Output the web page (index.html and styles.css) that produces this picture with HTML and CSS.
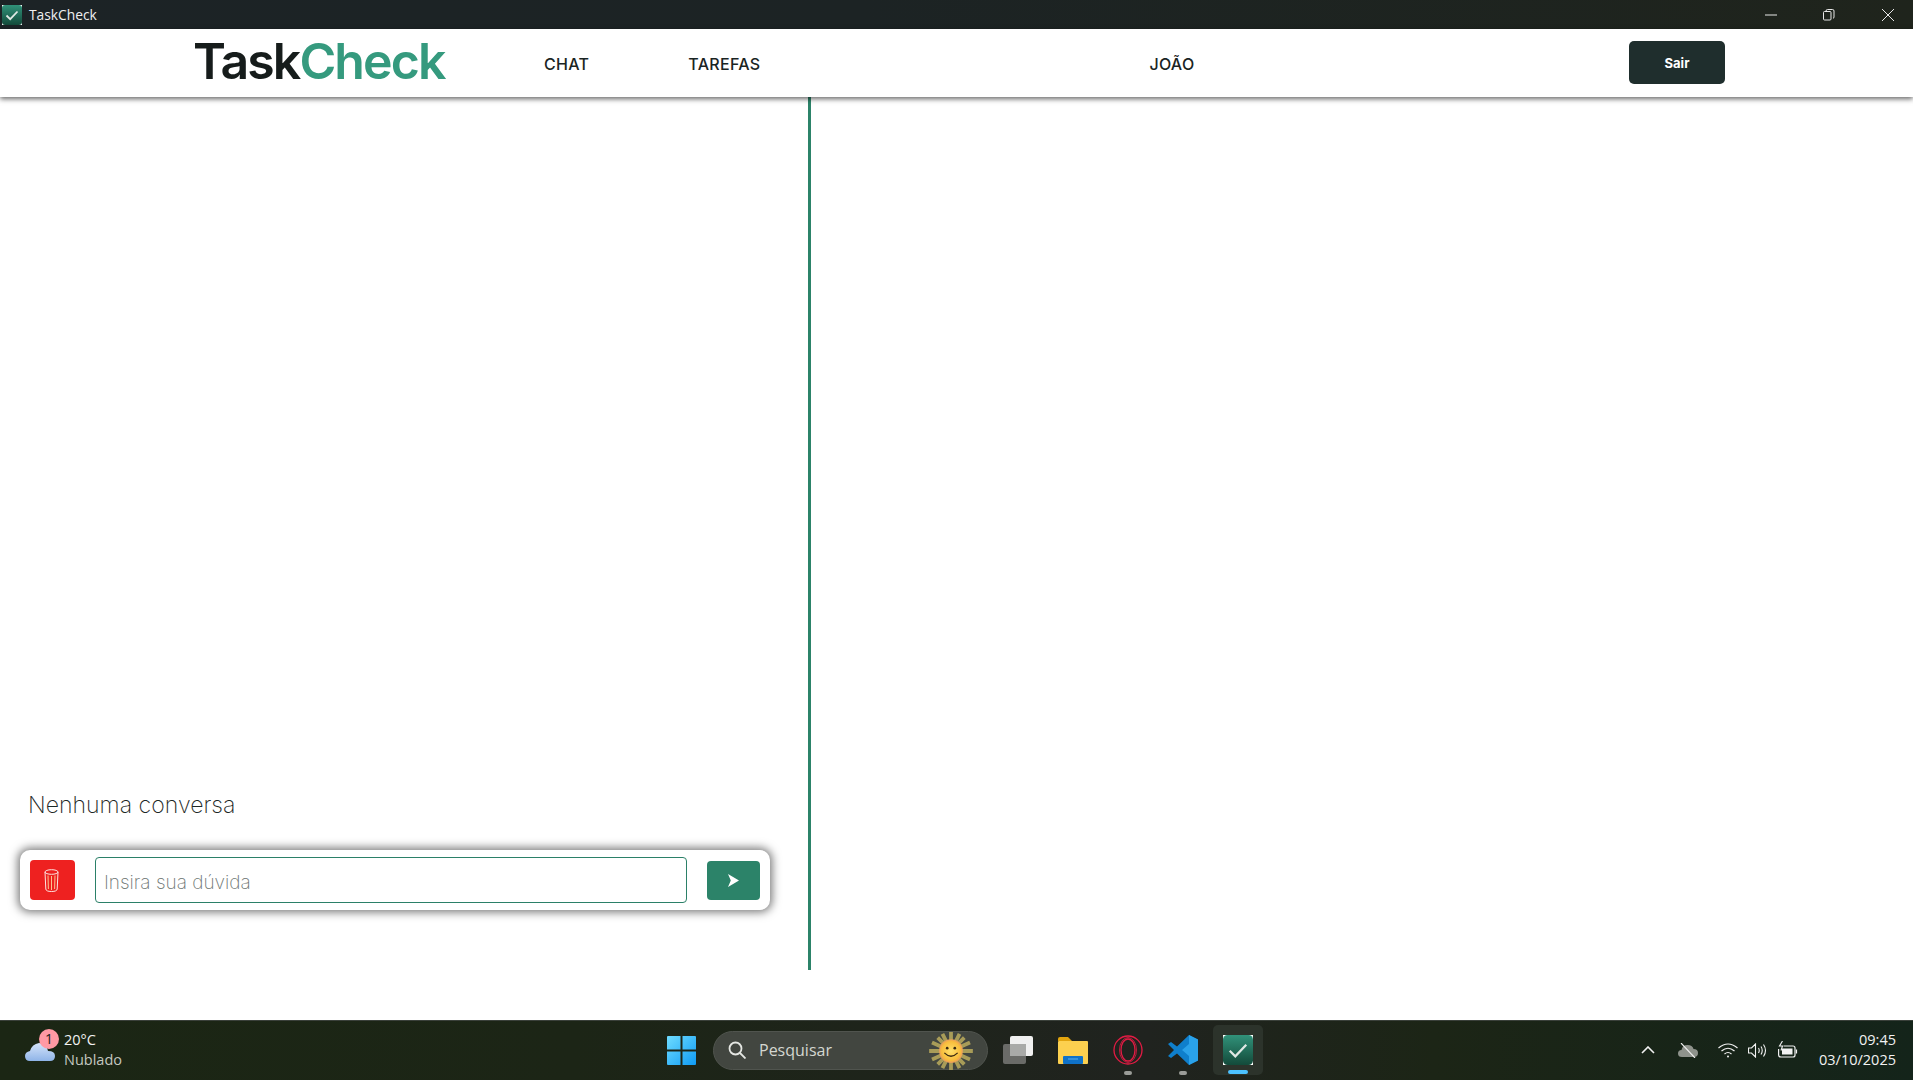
FILE: index.html
```html
<!DOCTYPE html>
<html lang="pt-BR">
<head>
<meta charset="utf-8">
<title>TaskCheck</title>
<link rel="stylesheet" href="styles.css">
</head>
<body>
  <!-- barra de titulo -->
  <div class="titlebar">
    <svg class="title-icon" viewBox="0 0 20 20">
      <defs><linearGradient id="appg" x1="0" y1="0" x2="0" y2="1"><stop offset="0" stop-color="#31927a"/><stop offset="1" stop-color="#134a3a"/></linearGradient></defs>
      <rect width="20" height="20" fill="#fff"/>
      <rect width="20" height="20" rx="3" fill="url(#appg)"/>
      <path d="M4.500 10.500l3.700 3.700 7.300-7.700" fill="none" stroke="#dfe8e4" stroke-width="1.800"/>
    </svg>
    <span class="title-text">TaskCheck</span>
    <div class="win-btns">
      <svg width="12" height="12" viewBox="0 0 12 12"><path d="M0 6h12" stroke="#e8e8e8"/></svg>
      <svg width="12" height="12" viewBox="0 0 12 12"><path d="M3 2.500V2q0-1.500 1.500-1.500h5q1.500 0 1.500 1.500v6q0 1-1 1.500M1.500 2.500h5.500q1 0 1 1v6.500q0 1-1 1H1.500q-1 0-1-1V3.500q0-1 1-1z" fill="none" stroke="#e8e8e8"/></svg>
      <svg class="win-close" width="12" height="12" viewBox="0 0 12 12"><path d="M0 0l12 12M12 0L0 12" stroke="#e8e8e8"/></svg>
    </div>
  </div>

  <!-- menu -->
  <nav class="nav">
    <div class="logo">Task<span class="logo-green">Check</span></div>
    <a class="nav-link link-chat">CHAT</a>
    <a class="nav-link link-tarefas">TAREFAS</a>
    <a class="nav-link link-user">JOÃO</a>
    <button class="btn-sair">Sair</button>
  </nav>

  <main class="main">
    <section class="chat-panel">
      <p class="empty-msg">Nenhuma conversa</p>
      <div class="chat-box">
        <button class="btn-trash">
          <svg width="15" height="23" viewBox="0 0 15 23" fill="none" stroke="#fde3e0" stroke-width="1">
            <ellipse cx="7.500" cy="3" rx="6.500" ry="2.300"/>
            <path d="M1 3l.8 17q.2 2.500 5.700 2.500t5.700-2.500L14 3"/>
            <path d="M4 6.500l.4 13.500M7.500 7v14M11 6.500l-.4 13.500" stroke="#fcc38f"/>
          </svg>
        </button>
        <input class="chat-input" type="text" placeholder="Insira sua dúvida">
        <button class="btn-send">
          <svg width="11" height="13" viewBox="0 0 11 13"><path d="M0 0l11 6.500L0 13l2.800-6.500z" fill="#fff"/></svg>
        </button>
      </div>
    </section>
    <section class="right-panel"></section>
  </main>

  <!-- barra de tarefas do windows -->
  <footer class="taskbar">
    <div class="tb-left">
      <div class="weather-icon">
        <svg width="30" height="20" viewBox="0 0 30 20">
          <defs><linearGradient id="cloud" x1="0" y1="0" x2="0" y2="1"><stop offset="0" stop-color="#d5e4fa"/><stop offset="1" stop-color="#8fb4e8"/></linearGradient></defs>
          <path d="M5 20q-5 0-5-5 0-4 5-5 2-7 9-8 7 0 9 8 7 0 7 5t-5 5z" fill="url(#cloud)"/>
        </svg>
        <span class="badge">1</span>
      </div>
      <div class="weather-text">
        <span class="temp">20°C</span>
        <span class="cond">Nublado</span>
      </div>
    </div>

    <div class="tb-center">
      <svg class="tb-start" width="29" height="29" viewBox="0 0 29 29">
        <defs><linearGradient id="win" x1="0" y1="0" x2="1" y2="1"><stop offset="0" stop-color="#6fdcff"/><stop offset="1" stop-color="#0f9bf5"/></linearGradient></defs>
        <path d="M1 0h12.500v13.500H0V1q0-1 1-1zM15.500 0H28q1 0 1 1v12.500H15.500zM0 15.500h13.500V29H1q-1 0-1-1zM15.500 15.500H29V28q0 1-1 1H15.500z" fill="url(#win)"/>
      </svg>
      <div class="tb-search">
        <svg width="18" height="18" viewBox="0 0 18 18" fill="none" stroke="#e4e6e2" stroke-width="1.800"><circle cx="7.500" cy="7.500" r="6"/><path d="M12 12l5.500 5.500"/></svg>
        <span class="search-text">Pesquisar</span>
        <svg class="search-sun" width="46" height="40" viewBox="-3 0 46 40">
          <defs><radialGradient id="sun"><stop offset="0" stop-color="#ffe06a"/><stop offset=".8" stop-color="#f8bd3c"/><stop offset="1" stop-color="#e89a5c"/></radialGradient></defs>
          <g stroke="#a89c58" stroke-width="4">
            <path d="M20 0v40M-3 20h46M6 6l28 28M34 6L6 34M11 2l18 36M29 2L11 38M0 11l40 18M40 11L0 29"/>
          </g>
          <circle cx="20" cy="20" r="12.500" fill="url(#sun)"/>
          <circle cx="16" cy="17" r="1.400" fill="#3a2a10"/><circle cx="24" cy="17" r="1.400" fill="#3a2a10"/>
          <path d="M13 22q7 7 14 0" fill="none" stroke="#3a2a10" stroke-width="1.300"/>
        </svg>
      </div>
      <svg class="tb-icon tb-taskview" width="30" height="28" viewBox="0 0 30 28">
        <rect x="0" y="8" width="23" height="20" rx="2" fill="#6a6b68"/>
        <rect x="7" y="0" width="23" height="20" rx="2" fill="#f0f0f0"/>
        <rect x="7" y="8" width="16" height="12" fill="#a9aaa8"/>
      </svg>
      <svg class="tb-icon" width="30" height="27" viewBox="0 0 30 27">
        <path d="M0 2q0-2 2-2h8l4 4h-14z" fill="#e2a40e"/>
        <rect y="4" width="30" height="23" rx="1" fill="#fcd04f"/>
        <rect x="5" y="19" width="20" height="8" rx="1" fill="#0f72c9"/>
        <path d="M10 22h10" stroke="#5ab0ef"/>
      </svg>
      <div class="tb-app">
        <svg width="30" height="30" viewBox="0 0 30 30" fill="none" stroke="#e31b44" stroke-width="1.300">
          <circle cx="15" cy="15" r="14"/><ellipse cx="15" cy="15" rx="7" ry="11"/>
          <ellipse cx="15" cy="15" rx="8.500" ry="12.500" stroke-width=".8"/>
        </svg>
        <span class="run-dot"></span>
      </div>
      <div class="tb-app">
        <svg width="30" height="30" viewBox="0 0 30 30">
          <path d="M21 0l9 4.500v21L21 30 9 18.500 3 23 0 21l6-6-6-6 3-2 6 4.500z" fill="#0f7fcc"/>
          <path d="M21 0l9 4.500v21L21 30V21l-7-6 7-6z" fill="#2aa2ea"/>
        </svg>
        <span class="run-dot"></span>
      </div>
      <div class="tb-active">
        <svg width="30" height="30" viewBox="0 0 20 20">
          <rect width="20" height="20" fill="#fff"/>
          <rect width="20" height="20" rx="3" fill="url(#appg)"/>
          <path d="M4.500 10.500l3.700 3.700 7.300-7.700" fill="none" stroke="#dfe8e4" stroke-width="1.500"/>
        </svg>
        <span class="active-bar"></span>
      </div>
    </div>

    <div class="tb-right">
      <svg width="14" height="8" viewBox="0 0 14 8"><path d="M1 7l6-6 6 6" fill="none" stroke="#f2f2f2" stroke-width="1.600"/></svg>
      <svg class="tray-cloud" width="20" height="15" viewBox="0 0 20 15">
        <path d="M4 14q-4 0-4-3.500T3.500 7q1-5 6-5t6 4q4.500 0 4.500 4t-4 4z" fill="#8f938c"/>
        <path d="M3 0l14 15" stroke="#f0f0f0" stroke-width="1.100"/>
      </svg>
      <svg class="tray-wifi" width="20" height="15" viewBox="0 0 20 15" fill="none" stroke="#f2f2f2" stroke-width="1.200">
        <path d="M.5 5q9.500-8 19 0M3.500 8q6.500-5.500 13 0M6.500 11q3.500-3 7 0"/><circle cx="10" cy="13.500" r="1" fill="#f2f2f2" stroke="none"/>
      </svg>
      <svg class="tray-vol" width="20" height="15" viewBox="0 0 20 15" fill="none" stroke="#f2f2f2" stroke-width="1.100">
        <path d="M.5 5h3l4-4v13l-4-4h-3zM10.500 5q1.500 2.500 0 5M13 3.500q2.500 4 0 8M15.500 1.500q4 6 0 12"/>
      </svg>
      <svg class="tray-bat" width="20" height="18" viewBox="0 0 20 18" fill="none" stroke="#f2f2f2" stroke-width="1.200">
        <path d="M5.500 5H15q2 0 2 2v7q0 2-2 2H3q-2.400 0-2.400-2V8"/>
        <rect x="4" y="7.500" width="10.500" height="6" fill="#f2f2f2" stroke="none"/>
        <path d="M18.500 8.500v4"/>
        <path d="M4.500 0L1.500 5h3L3 9.500" stroke-width="1.100"/>
      </svg>
      <div class="clock">
        <span>09:45</span>
        <span>03/10/2025</span>
      </div>
    </div>
  </footer>
</body>
</html>
```

FILE: styles.css
```css
* { box-sizing: border-box; }

html, body { margin: 0; height: 100%; }

body {
  width: 1913px;
  height: 1080px;
  display: flex;
  flex-direction: column;
  overflow: hidden;
  background: #fff;
  font-family: "Inter", "Liberation Sans", sans-serif;
}

/* barra de titulo */
.titlebar {
  height: 29px;
  flex: none;
  display: flex;
  align-items: center;
  padding-left: 2px;
  background: linear-gradient(90deg, #1c2326 0%, #1c2324 45%, #1f241c 100%);
  color: #f0f0f0;
}
.title-icon { width: 20px; height: 20px; }
.title-text { margin-left: 7px; font: 13.800px "Open Sans", sans-serif; }
.win-btns {
  margin-left: auto;
  display: flex;
  gap: 46px;
  padding-right: 19px;
}
.win-close { margin-left: 1px; }

/* menu */
.nav {
  height: 68px;
  flex: none;
  display: flex;
  align-items: center;
  position: relative;
  z-index: 2;
  padding-left: 193px;
  background: #fff;
  box-shadow: 0 2px 5px rgba(0, 0, 0, .6);
}
.logo {
  width: 252px;
  margin-top: -5px;
  font-size: 50px;
  font-weight: 600;
  letter-spacing: -1.900px;
  color: #161c1b;
}
.logo-green { color: #359a7e; }
.nav-link { font-size: 16px; font-weight: 500; letter-spacing: .3px; color: #1a2423; }
.link-chat { margin-left: 99px; margin-top: 2px; }
.link-tarefas { margin-left: 99px; margin-top: 2px; }
.link-user { margin-left: 389px; margin-top: 2px; }
.btn-sair {
  width: 96px;
  height: 43px;
  margin-left: auto;
  margin-right: 188px;
  margin-top: -1px;
  border: 0;
  border-radius: 5px;
  background: #1f2e2d;
  color: #fff;
  font: 700 13px "Inter", sans-serif;
}

/* area principal */
.main { flex: 1; display: flex; align-items: flex-start; }
.chat-panel {
  width: 811px;
  height: 873px;
  display: flex;
  flex-direction: column;
  justify-content: flex-end;
  padding: 0 38px 60px 20px;
  border-right: 3px solid #2c8369;
}
.empty-msg {
  margin: 0 0 31px 8px;
  font-size: 23.100px;
  font-weight: 200;
  color: #1d2725;
}
.chat-box {
  height: 60px;
  display: flex;
  align-items: center;
  padding: 0 10px;
  border-radius: 10px;
  background: #fff;
  box-shadow: 0 0 10px 2px rgba(0, 0, 0, .55);
}
.btn-trash {
  width: 45px;
  height: 40px;
  flex: none;
  display: flex;
  align-items: center;
  justify-content: center;
  padding: 0 2px 0 0;
  border: 0;
  border-radius: 4px;
  background: #ee2120;
}
.chat-input {
  flex: 1;
  height: 46px;
  margin: 0 20px;
  padding: 4px 8px 0;
  border: 1px solid #2b8068;
  border-radius: 4px;
  outline: none;
  font: 200 19px "Inter", sans-serif;
}
.chat-input::placeholder { color: #6f7775; }
.btn-send {
  width: 53px;
  height: 39px;
  flex: none;
  display: flex;
  align-items: center;
  justify-content: center;
  padding: 0;
  border: 0;
  border-radius: 4px;
  background: #2c8369;
}
.right-panel { flex: 1; }

/* barra de tarefas */
.taskbar {
  height: 60px;
  flex: none;
  display: grid;
  grid-template-columns: 667px 596px 1fr;
  align-items: center;
  border-top: 1px solid #3a403a;
  background: linear-gradient(90deg, #1b2614 0%, #1c2516 30%, #20231f 60%, #1c2516 75%, #14241a 100%);
  color: #f2f2f2;
  font-family: "Open Sans", sans-serif;
}
.tb-left { display: flex; align-items: center; padding-left: 25px; }
.weather-icon { position: relative; width: 30px; height: 20px; }
.weather-icon svg { display: block; }
.badge {
  position: absolute;
  top: -12px;
  left: 14px;
  width: 20px;
  height: 20px;
  border-radius: 50%;
  background: #ff99a4;
  color: #1c1c1c;
  font-size: 14px;
  line-height: 20px;
  text-align: center;
}
.weather-text {
  display: flex;
  flex-direction: column;
  margin-top: -2px;
  margin-left: 9px;
  font-size: 14.500px;
  line-height: 20px;
}
.cond { color: #c4c8c0; }

.tb-center { display: flex; align-items: center; margin-top: -1px; }
.tb-start { flex: none; }
.tb-search {
  width: 275px;
  height: 39px;
  flex: none;
  display: flex;
  align-items: center;
  margin: 0 15px 0 17px;
  padding-left: 14px;
  border: 1px solid #50544e;
  border-radius: 20px;
  background: #424640;
  position: relative;
}
.search-text { margin-left: 13px; font-size: 16px; color: #d4d7d0; }
.search-sun { position: absolute; right: 13px; top: 0; height: 38px; }
.tb-icon { flex: none; margin-right: 25px; }
.tb-taskview { margin-top: -1px; }
.tb-app {
  width: 30px;
  height: 30px;
  flex: none;
  position: relative;
  margin-right: 25px;
}
.tb-app svg { display: block; }
.run-dot {
  position: absolute;
  top: 36px;
  left: 11px;
  width: 8px;
  height: 4px;
  border-radius: 2px;
  background: #9a9c98;
}
.tb-active {
  width: 50px;
  height: 50px;
  flex: none;
  display: flex;
  align-items: center;
  justify-content: center;
  position: relative;
  margin-left: -10px;
  border-radius: 5px;
  background: #2c332b;
}
.active-bar {
  position: absolute;
  bottom: 1px;
  left: 15px;
  width: 20px;
  height: 4px;
  border-radius: 2px;
  background: #4cc2ff;
}

.tb-right {
  display: flex;
  align-items: center;
  justify-content: flex-end;
  padding-right: 17px;
  margin-top: -1px;
}
.tray-cloud { margin-left: 23px; }
.tray-wifi { margin-left: 20px; }
.tray-vol { margin-left: 10px; }
.tray-bat { margin-left: 10px; }
.clock {
  width: 78px;
  display: flex;
  flex-direction: column;
  align-items: flex-end;
  margin-left: 20px;
  font-size: 14.500px;
  line-height: 20px;
}
```
